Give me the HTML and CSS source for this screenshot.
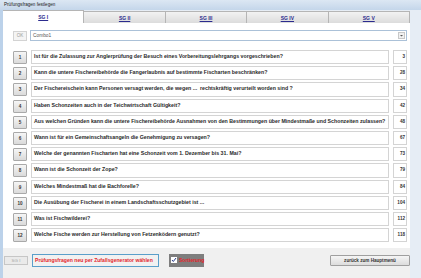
FILE: index.html
```html
<!DOCTYPE html>
<html>
<head>
<meta charset="utf-8">
<link rel="stylesheet" href="styles.css">
</head>
<body>
<div class="window">
  <div class="titlebar">Prüfungsfragen festlegen</div>
  <div class="client">
    <div class="main">
      <div class="tabs">
        <div class="tab active"><span>SG I</span></div>
        <div class="tab"><span>SG II</span></div>
        <div class="tab"><span>SG III</span></div>
        <div class="tab"><span>SG IV</span></div>
        <div class="tab"><span>SG V</span></div>
      </div>
      <div class="panel">
        <div class="comborow">
          <div class="okbtn">OK</div>
          <div class="combo"><span>Combo1</span><div class="drop"><svg width="7" height="7" viewBox="0 0 7 7"><path d="M2 3h3l-1.5 1.5z" fill="#555"/></svg></div></div>
        </div>
        <div class="questions">
          <div class="row"><div class="nbtn">1</div><div class="qtext">Ist für die Zulassung zur Anglerprüfung der Besuch eines Vorbereitungslehrgangs vorgeschrieben?</div><div class="qnum">3</div></div>
          <div class="row"><div class="nbtn">2</div><div class="qtext">Kann die untere Fischereibehörde die Fangerlaubnis auf bestimmte Fischarten beschränken?</div><div class="qnum">28</div></div>
          <div class="row"><div class="nbtn">3</div><div class="qtext">Der Fischereischein kann Personen versagt werden, die wegen ...&nbsp; rechtskräftig verurteilt worden sind ?</div><div class="qnum">34</div></div>
          <div class="row"><div class="nbtn">4</div><div class="qtext">Haben Schonzeiten auch in der Teichwirtschaft Gültigkeit?</div><div class="qnum">42</div></div>
          <div class="row"><div class="nbtn">5</div><div class="qtext">Aus welchen Gründen kann die untere Fischereibehörde Ausnahmen von den Bestimmungen über Mindestmaße und Schonzeiten zulassen?</div><div class="qnum">48</div></div>
          <div class="row"><div class="nbtn">6</div><div class="qtext">Wann ist für ein Gemeinschaftsangeln die Genehmigung zu versagen?</div><div class="qnum">67</div></div>
          <div class="row"><div class="nbtn">7</div><div class="qtext">Welche der genannten Fischarten hat eine Schonzeit vom 1. Dezember bis 31. Mai?</div><div class="qnum">73</div></div>
          <div class="row"><div class="nbtn">8</div><div class="qtext">Wann ist die Schonzeit der Zope?</div><div class="qnum">79</div></div>
          <div class="row"><div class="nbtn">9</div><div class="qtext">Welches Mindestmaß hat die Bachforelle?</div><div class="qnum">84</div></div>
          <div class="row"><div class="nbtn">10</div><div class="qtext">Die Ausübung der Fischerei in einem Landschaftsschutzgebiet ist ...</div><div class="qnum">104</div></div>
          <div class="row"><div class="nbtn">11</div><div class="qtext">Was ist Fischwilderei?</div><div class="qnum">112</div></div>
          <div class="row"><div class="nbtn">12</div><div class="qtext">Welche Fische werden zur Herstellung von Fetzenködern genutzt?</div><div class="qnum">118</div></div>
        </div>
      </div>
      <div class="bottombar">
        <div class="sgbtn">SG I</div>
        <div class="randbox">Prüfungsfragen neu per Zufallsgenerator wählen</div>
        <div class="sortbox"><span class="check"><svg width="6" height="6" viewBox="0 0 6 6"><path d="M1 3l1.3 1.5L5 1" stroke="#2a3f8c" stroke-width="1" fill="none"/></svg></span><span>Sortierung</span></div>
        <div class="backbtn">zurück zum Hauptmenü</div>
      </div>
    </div>
    <div class="rightframe"></div>
  </div>
</div>
</body>
</html>
```

FILE: styles.css
```css
html, body {
  margin: 0;
  padding: 0;
}
body {
  width: 421px;
  height: 278px;
  overflow: hidden;
  font-family: "Liberation Sans", Arial, sans-serif;
  background: #f0f0f0;
}
.window {
  width: 421px;
  height: 278px;
  display: flex;
  flex-direction: column;
  background: #eef1f5;
}
.titlebar {
  height: 10px;
  flex: none;
  background: linear-gradient(#dce7f3, #c4d6ea);
  font-size: 4.6px;
  color: #222;
  padding-left: 4px;
  line-height: 10px;
  box-sizing: border-box;
}
.client {
  flex: 1;
  display: flex;
  border-left: 3px solid #bcd2ea;
}
.main {
  width: 407px;
  display: flex;
  flex-direction: column;
}
.rightframe {
  flex: 1;
  background: #e6edf5;
}
.tabs {
  height: 13px;
  display: flex;
  align-items: flex-end;
  background: #e6edf5;
}
.tab {
  width: 81.4px;
  height: 12px;
  box-sizing: border-box;
  border: 1px solid #b5b5b5;
  border-bottom: none;
  border-left: none;
  background: linear-gradient(#f2f2f2, #dcdcdc);
  display: flex;
  justify-content: center;
  padding-top: 3px;
}
.tab.active {
  height: 13px;
  background: #fff;
  padding-top: 3px;
}
.tab span {
  font-size: 5px;
  font-weight: bold;
  color: #2b2b8e;
  text-decoration: underline;
}
.panel {
  background: #fff;
  height: 225px;
  box-sizing: border-box;
  padding: 7px 3px 0 10px;
  display: flex;
  flex-direction: column;
}
.comborow {
  display: flex;
  align-items: center;
  height: 11px;
  gap: 3px;
}
.okbtn {
  width: 14px;
  height: 10px;
  box-sizing: border-box;
  border: 1px solid #d3d3d3;
  background: #f4f4f4;
  color: #9a9a9a;
  font-size: 4.6px;
  display: flex;
  align-items: center;
  justify-content: center;
}
.combo {
  flex: 1;
  height: 11px;
  box-sizing: border-box;
  border: 1px solid #abc1d8;
  display: flex;
  align-items: center;
  padding-left: 2px;
  font-size: 4.8px;
  color: #555;
}
.combo span {
  flex: 1;
}
.drop {
  width: 7px;
  height: 7px;
  margin-right: 1px;
  box-sizing: border-box;
  border: 1px solid #c8c8c8;
  background: #f0f0f0;
  display: flex;
}
.drop svg {
  margin: -1px;
}
.questions {
  margin-top: 9px;
  display: flex;
  flex-direction: column;
  gap: 2px;
}
.row {
  display: flex;
  height: 14.2px;
  gap: 4px;
}
.nbtn {
  width: 14px;
  height: 13px;
  margin-top: 1px;
  box-sizing: border-box;
  border: 1px solid #a9a9a9;
  border-radius: 1px;
  background: linear-gradient(#f6f6f6, #dadada);
  font-size: 4.6px;
  font-weight: bold;
  color: #333;
  display: flex;
  align-items: center;
  justify-content: center;
}
.qtext {
  flex: 1;
  box-sizing: border-box;
  border: 1px solid #d4d4d4;
  font-size: 5.25px;
  font-weight: bold;
  color: #2a2a2a;
  padding: 2px 0 0 2px;
  white-space: nowrap;
  overflow: hidden;
  line-height: 7px;
}
.qnum {
  width: 14px;
  box-sizing: border-box;
  border: 1px solid #d4d4d4;
  font-size: 4.6px;
  font-weight: bold;
  color: #333;
  text-align: right;
  padding: 3px 1px 0 0;
  line-height: 6px;
}
.bottombar {
  flex: 1;
  background: #f0f0f0;
  display: flex;
  align-items: center;
  padding-left: 1px;
  padding-bottom: 6px;
}
.sgbtn {
  width: 24px;
  height: 9px;
  box-sizing: border-box;
  border: 1px solid #c6c6c6;
  background: #eaeaea;
  color: #a5a5a5;
  font-size: 4.4px;
  display: flex;
  align-items: center;
  justify-content: center;
}
.randbox {
  margin-left: 4px;
  width: 127px;
  height: 13px;
  box-sizing: border-box;
  border: 1px solid #5a9fca;
  background: #f1f1f1;
  color: #e4242b;
  font-size: 5.1px;
  font-weight: bold;
  display: flex;
  align-items: center;
  padding-left: 2px;
  white-space: nowrap;
}
.sortbox {
  margin-left: 10px;
  width: 35px;
  height: 13px;
  background: #7e7e7e;
  display: flex;
  align-items: center;
  gap: 2px;
  padding-left: 2px;
  box-sizing: border-box;
  color: #e4242b;
  font-size: 5px;
  font-weight: bold;
}
.check {
  width: 6px;
  height: 6px;
  background: #fff;
  box-sizing: border-box;
  display: flex;
}
.backbtn {
  margin-left: auto;
  width: 80px;
  height: 11px;
  box-sizing: border-box;
  border: 1px solid #9f9f9f;
  border-radius: 1px;
  background: linear-gradient(#f5f5f5, #dcdcdc);
  color: #333;
  font-size: 4.6px;
  font-weight: bold;
  display: flex;
  align-items: center;
  justify-content: center;
}
```
